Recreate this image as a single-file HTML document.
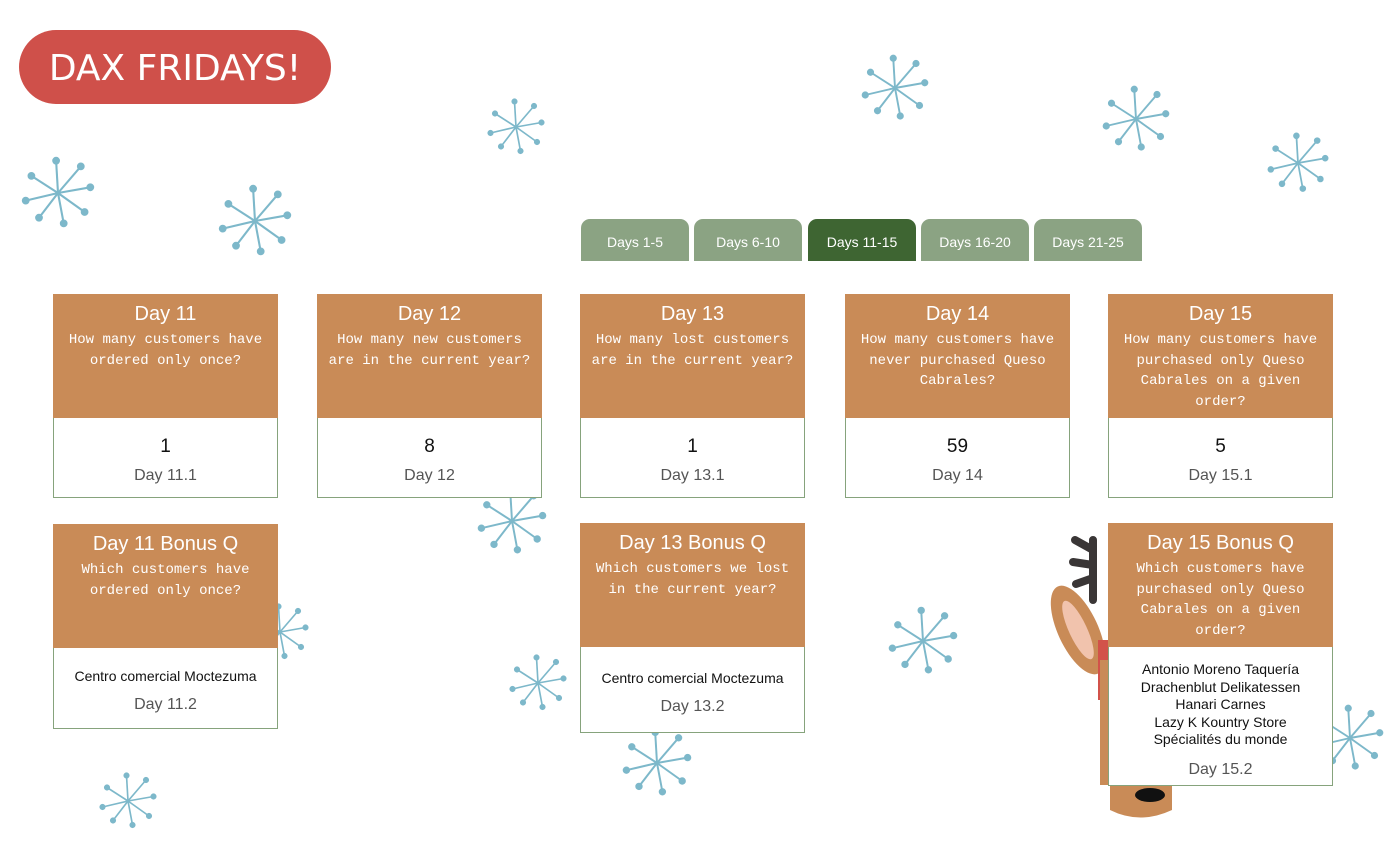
<!DOCTYPE html>
<html><head><meta charset="utf-8"><style>
body{margin:0;width:1400px;height:845px;background:#fff;position:relative;overflow:hidden;font-family:"Liberation Sans",sans-serif}
.logo{position:absolute;left:19px;top:30px;width:312px;height:74px;border-radius:37px;background:#cf504a;color:#fff;font-family:"DejaVu Sans",sans-serif;font-size:36px;line-height:78px;text-align:center;letter-spacing:0}
.tab{position:absolute;top:219px;width:108px;height:42px;background:#8ba383;border-radius:9px 9px 0 0;color:#fff;font-size:14px;line-height:46px;text-align:center}
.tab.on{background:#3e6532}
.card{position:absolute;width:225px}
.hd{background:#c98b57;color:#fff;text-align:center;box-sizing:border-box;padding-top:8px}
.hd h{display:block;font-size:20px;line-height:24px;margin-bottom:4px}
.hd p{margin:0;font-family:"Liberation Mono",monospace;font-size:14px;line-height:20.5px;padding:0 6px}
.bd{background:#fff;border:1px solid #86a37c;border-top:none;text-align:center;box-sizing:border-box}
.v{font-size:19px;color:#111}
.l{font-size:16px;color:#555}
.n{font-size:14px;color:#111;line-height:17.5px}
</style></head><body>
<svg width="1400" height="845" style="position:absolute;left:0;top:0">
<defs><symbol id="s" viewBox="-40 -40 80 80"><g stroke="#7db8ca" stroke-width="2.2" fill="#7db8ca">
<line x1="0" y1="0" x2="-2" y2="-34"/><circle cx="-2" cy="-34" r="3"/>
<line x1="0" y1="0" x2="24" y2="-28"/><circle cx="24" cy="-28" r="3"/>
<line x1="0" y1="0" x2="34" y2="-6"/><circle cx="34" cy="-6" r="3"/>
<line x1="0" y1="0" x2="28" y2="20"/><circle cx="28" cy="20" r="3"/>
<line x1="0" y1="0" x2="6" y2="32"/><circle cx="6" cy="32" r="3"/>
<line x1="0" y1="0" x2="-20" y2="26"/><circle cx="-20" cy="26" r="3"/>
<line x1="0" y1="0" x2="-34" y2="8"/><circle cx="-34" cy="8" r="3"/>
<line x1="0" y1="0" x2="-28" y2="-18"/><circle cx="-28" cy="-18" r="3"/></g></symbol></defs>
<use href="#s" x="486" y="97" width="60" height="60"/>
<use href="#s" x="860" y="53" width="70" height="70"/>
<use href="#s" x="1101" y="84" width="70" height="70"/>
<use href="#s" x="1266" y="131" width="64" height="64"/>
<use href="#s" x="20" y="155" width="76" height="76"/>
<use href="#s" x="217" y="183" width="76" height="76"/>
<use href="#s" x="476" y="485" width="72" height="72"/>
<use href="#s" x="508" y="653" width="60" height="60"/>
<use href="#s" x="887" y="605" width="72" height="72"/>
<use href="#s" x="621" y="727" width="72" height="72"/>
<use href="#s" x="98" y="771" width="60" height="60"/>
<use href="#s" x="1315" y="703" width="70" height="70"/>
<use href="#s" x="250" y="602" width="60" height="60"/>
<g>
<path d="M1093 540 L1093 600 M1093 550 l-18 -10 M1093 565 l-20 -3 M1093 578 l-17 6" stroke="#3a3636" stroke-width="8" stroke-linecap="round"/>
<ellipse cx="1078" cy="630" rx="20" ry="48" fill="#c98b57" transform="rotate(-25 1078 630)"/>
<ellipse cx="1078" cy="630" rx="9" ry="32" fill="#f1c3ad" transform="rotate(-25 1078 630)"/>
<path d="M1098 640 L1110 640 L1110 700 L1098 700 Z" fill="#d2524a"/>
<path d="M1100 660 L1110 660 L1110 810 Q1140 825 1172 810 L1172 785 L1100 785 Z" fill="#c98b57"/>
<ellipse cx="1150" cy="795" rx="15" ry="7" fill="#111"/>
</g>
</svg>
<div class="logo">DAX FRIDAYS!</div>
<div class="tab" style="left:581px">Days 1-5</div>
<div class="tab" style="left:694px">Days 6-10</div>
<div class="tab on" style="left:808px">Days 11-15</div>
<div class="tab" style="left:921px">Days 16-20</div>
<div class="tab" style="left:1034px">Days 21-25</div>

<div class="card" style="left:53px;top:294px"><div class="hd" style="height:124px"><h>Day 11</h><p>How many customers have ordered only once?</p></div><div class="bd" style="height:80px;padding-top:18px"><div class="v">1</div><div class="l" style="margin-top:9px">Day 11.1</div></div></div>
<div class="card" style="left:317px;top:294px"><div class="hd" style="height:124px"><h>Day 12</h><p>How many new customers are in the current year?</p></div><div class="bd" style="height:80px;padding-top:18px"><div class="v">8</div><div class="l" style="margin-top:9px">Day 12</div></div></div>
<div class="card" style="left:580px;top:294px"><div class="hd" style="height:124px"><h>Day 13</h><p>How many lost customers are in the current year?</p></div><div class="bd" style="height:80px;padding-top:18px"><div class="v">1</div><div class="l" style="margin-top:9px">Day 13.1</div></div></div>
<div class="card" style="left:845px;top:294px"><div class="hd" style="height:124px"><h>Day 14</h><p>How many customers have never purchased Queso Cabrales?</p></div><div class="bd" style="height:80px;padding-top:18px"><div class="v">59</div><div class="l" style="margin-top:9px">Day 14</div></div></div>
<div class="card" style="left:1108px;top:294px"><div class="hd" style="height:124px"><h>Day 15</h><p>How many customers have purchased only Queso Cabrales on a given order?</p></div><div class="bd" style="height:80px;padding-top:18px"><div class="v">5</div><div class="l" style="margin-top:9px">Day 15.1</div></div></div>

<div class="card" style="left:53px;top:524px"><div class="hd" style="height:124px"><h>Day 11 Bonus Q</h><p>Which customers have ordered only once?</p></div><div class="bd" style="height:81px;padding-top:20px"><div class="n">Centro comercial Moctezuma</div><div class="l" style="margin-top:10px">Day 11.2</div></div></div>
<div class="card" style="left:580px;top:523px"><div class="hd" style="height:124px"><h>Day 13 Bonus Q</h><p>Which customers we lost in the current year?</p></div><div class="bd" style="height:86px;padding-top:23px"><div class="n">Centro comercial Moctezuma</div><div class="l" style="margin-top:10px">Day 13.2</div></div></div>
<div class="card" style="left:1108px;top:523px"><div class="hd" style="height:124px"><h>Day 15 Bonus Q</h><p>Which customers have purchased only Queso Cabrales on a given order?</p></div><div class="bd" style="height:139px;padding-top:14px"><div class="n">Antonio Moreno Taquería<br>Drachenblut Delikatessen<br>Hanari Carnes<br>Lazy K Kountry Store<br>Spécialités du monde</div><div class="l" style="margin-top:12px">Day 15.2</div></div></div>
</body></html>
